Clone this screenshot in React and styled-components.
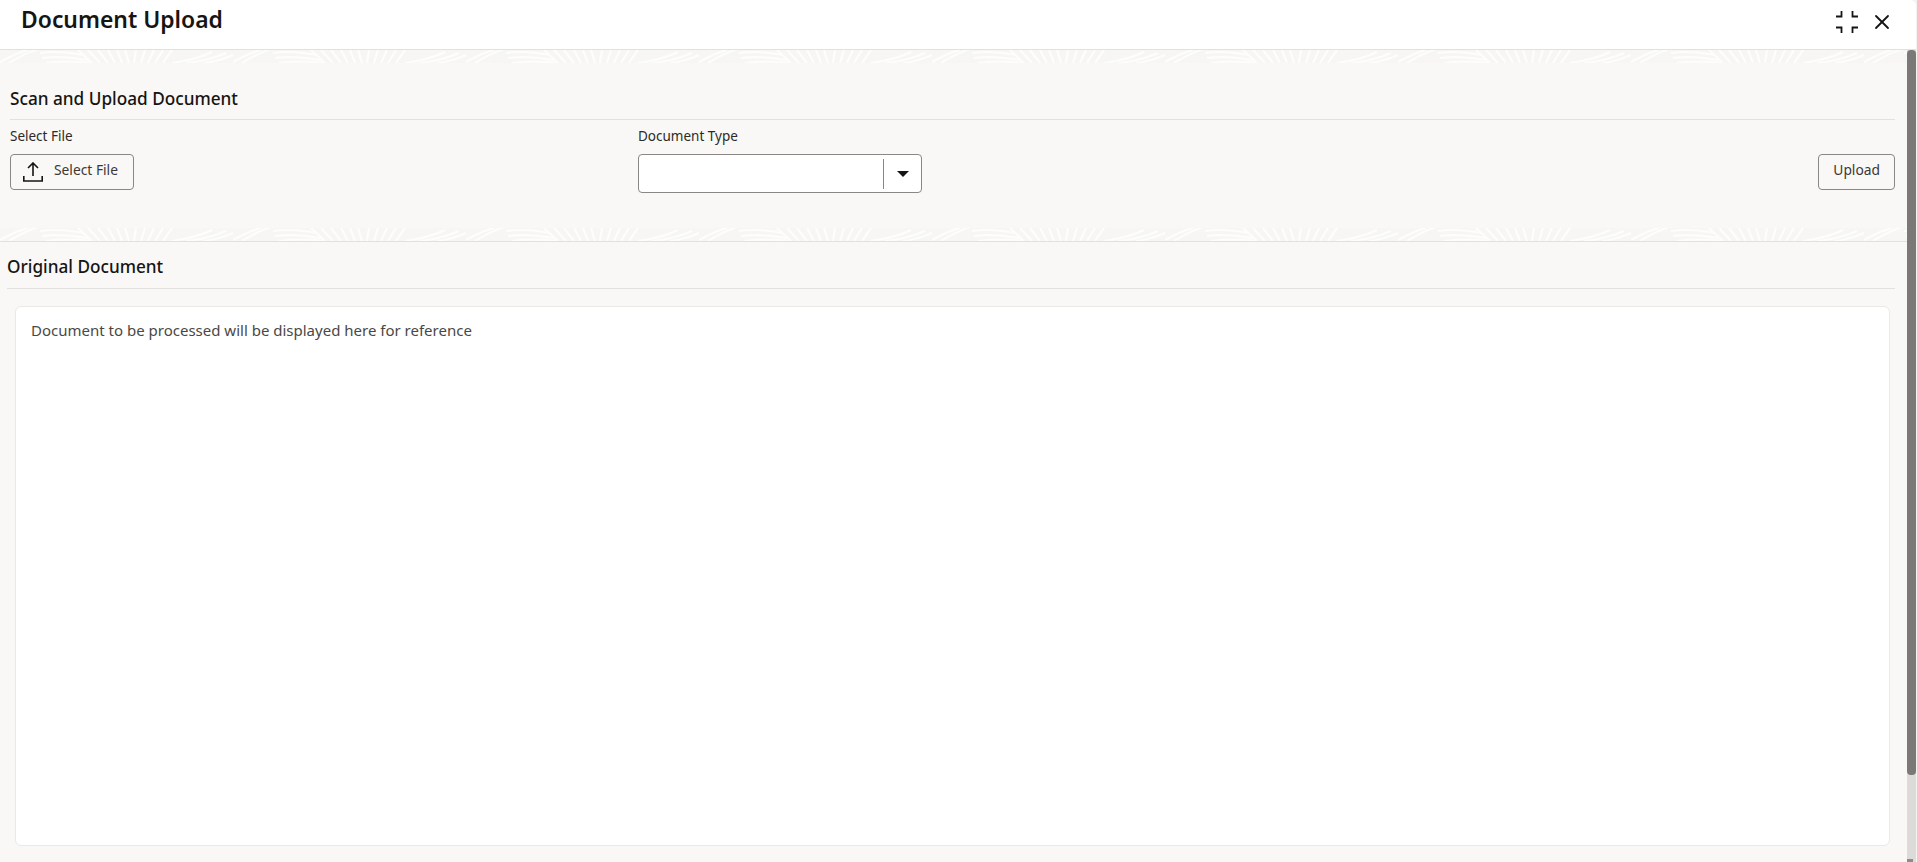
import React from "react";
import styled, { createGlobalStyle } from "styled-components";
import { X } from "lucide-react";

const GlobalStyle = createGlobalStyle`
  html, body {
    margin: 0;
    height: 100%;
    overflow: hidden;
    background: #f4f3f1;
  }
  * {
    box-sizing: border-box;
  }
`;

const Dialog = styled.div`
  width: 1916px;
  height: 862px;
  display: flex;
  flex-direction: column;
  background: #f9f8f6;
  font-family: "Noto Sans", "Open Sans", sans-serif;
  color: #161513;
  border-top-right-radius: 6px;
  overflow: hidden;
`;

const Header = styled.header`
  flex: none;
  height: 50px;
  background: #fff;
  border-bottom: 1px solid #e3e1de;
  display: flex;
  justify-content: space-between;
  padding: 0 22px 0 21px;
`;

const Title = styled.h1`
  margin: 3px 0 0;
  font-size: 22.9px;
  line-height: 34px;
  font-weight: 600;
`;

const HeaderIcons = styled.div`
  display: flex;
  align-items: center;
  gap: 12px;
  height: 44px;
`;

const IconButton = styled.span`
  display: flex;
  color: #161513;
`;

const Body = styled.div`
  flex: 1;
  min-height: 0;
  display: flex;
`;

const Content = styled.main`
  flex: 1;
  min-width: 0;
  display: flex;
  flex-direction: column;
`;

const BandWrap = styled.div`
  flex: none;
  height: 13px;
  overflow: hidden;
  background: #f7f6f4;
  svg {
    display: block;
  }
`;

const ScanSection = styled.section`
  flex: none;
  height: 165px;
  padding: 24px 12px 0 10px;
`;

const SectionTitle = styled.h2`
  margin: 0;
  font-size: 17.2px;
  line-height: 24px;
  font-weight: 500;
  padding-bottom: ${(p) => p.$pad || 8}px;
  border-bottom: 1px solid #e3e1de;
`;

const FieldRow = styled.div`
  display: flex;
  align-items: flex-start;
  padding-top: 6px;
`;

const Field = styled.div`
  width: ${(p) => p.$width}px;
  flex: none;
`;

const FieldLabel = styled.label`
  display: block;
  font-size: 13.5px;
  line-height: 20px;
  height: 20px;
  margin-bottom: 8px;
  color: #2c2a27;
`;

const OutlineButton = styled.button`
  height: 36px;
  display: inline-flex;
  align-items: center;
  gap: 11px;
  padding: ${(p) => (p.$icon ? "0 15px 0 12px" : "0 14px")};
  background: transparent;
  border: 1px solid #8a8784;
  border-radius: 4px;
  font: inherit;
  font-size: 13.8px;
  color: #3b3936;
  margin-left: ${(p) => (p.$push ? "auto" : 0)};
  margin-top: ${(p) => (p.$push ? "28px" : 0)};
`;

const ButtonText = styled.span`
  margin-top: -5px;
`;

const SelectBox = styled.div`
  width: 284px;
  height: 39px;
  display: flex;
  align-items: center;
  background: #fff;
  border: 1px solid #8a8784;
  border-radius: 4px;
`;

const SelectValue = styled.div`
  flex: 1;
  height: 30px;
  border-right: 1px solid #8a8784;
`;

const SelectCaret = styled.div`
  width: 37px;
  display: flex;
  justify-content: center;
  &::before {
    content: "";
    border-left: 6px solid transparent;
    border-right: 6px solid transparent;
    border-top: 6px solid #161513;
  }
`;

const OriginalSection = styled.section`
  flex: 1;
  min-height: 0;
  border-top: 1px solid #e3e1de;
  padding: 13px 12px 0 7px;
  display: flex;
  flex-direction: column;
`;

const PreviewCard = styled.div`
  width: 1875px;
  height: 540px;
  margin: 17px 0 0 8px;
  padding: 12px 15px;
  background: #fff;
  border: 1px solid #ebe9e6;
  border-radius: 6px;
  font-size: 15px;
  line-height: 22px;
  color: #4a4845;
`;

const ScrollTrack = styled.div`
  flex: none;
  width: 9px;
  background: #dcdbd9;
  display: flex;
  flex-direction: column;
  &::after {
    content: "";
    height: 3px;
    width: 6px;
    margin-top: auto;
    background: #8d8c8a;
  }
`;

const ScrollThumb = styled.div`
  height: 725px;
  background: #7a7977;
  border-radius: 4px;
`;

// wavy white stripes across the top of each panel
function Band({ id }) {
  return (
    <BandWrap>
      <svg width="1907" height="13" aria-hidden="true">
        <defs>
          <pattern id={id} width="233" height="13" patternUnits="userSpaceOnUse">
            <g fill="none" stroke="#fff" strokeWidth="2.2" opacity="0.75">
              <path d="M0 12C8 8 16 3 28 0M9 13C17 8 26 3 38 -1" />
              <path d="M40 3C54 1 68 2 84 5M42 8C56 6 70 7 88 10M46 13C60 11 74 11 92 13" />
              <path d="M78 0L92 13M88 0L100 13M98 0L108 13M108 0L115 13M117 0L122 13M125 0L129 13" />
              <path d="M134 13L136 0M141 13L145 0M148 13L154 0M155 13L163 0M163 13L172 0" />
              <path d="M172 13C186 11 200 8 212 2M186 13C198 12 212 9 226 3M204 13C214 12 224 9 233 5" />
            </g>
          </pattern>
        </defs>
        <rect width="1907" height="13" fill={`url(#${id})`} />
      </svg>
    </BandWrap>
  );
}

function CollapseIcon() {
  return (
    <svg width="22" height="22" viewBox="0 0 22 22" fill="none" stroke="#161513" strokeWidth="1.8">
      <path d="M0 5.5H5.5V0M16.5 0V5.5H22M0 16.5H5.5V22M16.5 22V16.5H22" />
    </svg>
  );
}

function UploadIcon() {
  return (
    <svg width="20" height="20" viewBox="0 0 20 20" fill="none" stroke="#161513" strokeWidth="1.6">
      <path d="M10 14V1.5M5 6L10 1L15 6" />
      <path d="M0.8 14V19H19.2V14" />
    </svg>
  );
}

export default function App() {
  return (
    <>
      <GlobalStyle />
      <Dialog>
        <Header>
          <Title>Document Upload</Title>
          <HeaderIcons>
            <IconButton>
              <CollapseIcon />
            </IconButton>
            <IconButton>
              <X size={24} strokeWidth={1.8} />
            </IconButton>
          </HeaderIcons>
        </Header>
        <Body>
          <Content>
            <Band id="waves-top" />
            <ScanSection>
              <SectionTitle>Scan and Upload Document</SectionTitle>
              <FieldRow>
                <Field $width={628}>
                  <FieldLabel>Select File</FieldLabel>
                  <OutlineButton $icon>
                    <UploadIcon />
                    <ButtonText>Select File</ButtonText>
                  </OutlineButton>
                </Field>
                <Field $width={284}>
                  <FieldLabel>Document Type</FieldLabel>
                  <SelectBox>
                    <SelectValue />
                    <SelectCaret />
                  </SelectBox>
                </Field>
                <OutlineButton $push>
                  <ButtonText>Upload</ButtonText>
                </OutlineButton>
              </FieldRow>
            </ScanSection>
            <Band id="waves-mid" />
            <OriginalSection>
              <SectionTitle $pad={9}>Original Document</SectionTitle>
              <PreviewCard>Document to be processed will be displayed here for reference</PreviewCard>
            </OriginalSection>
          </Content>
          <ScrollTrack>
            <ScrollThumb />
          </ScrollTrack>
        </Body>
      </Dialog>
    </>
  );
}
